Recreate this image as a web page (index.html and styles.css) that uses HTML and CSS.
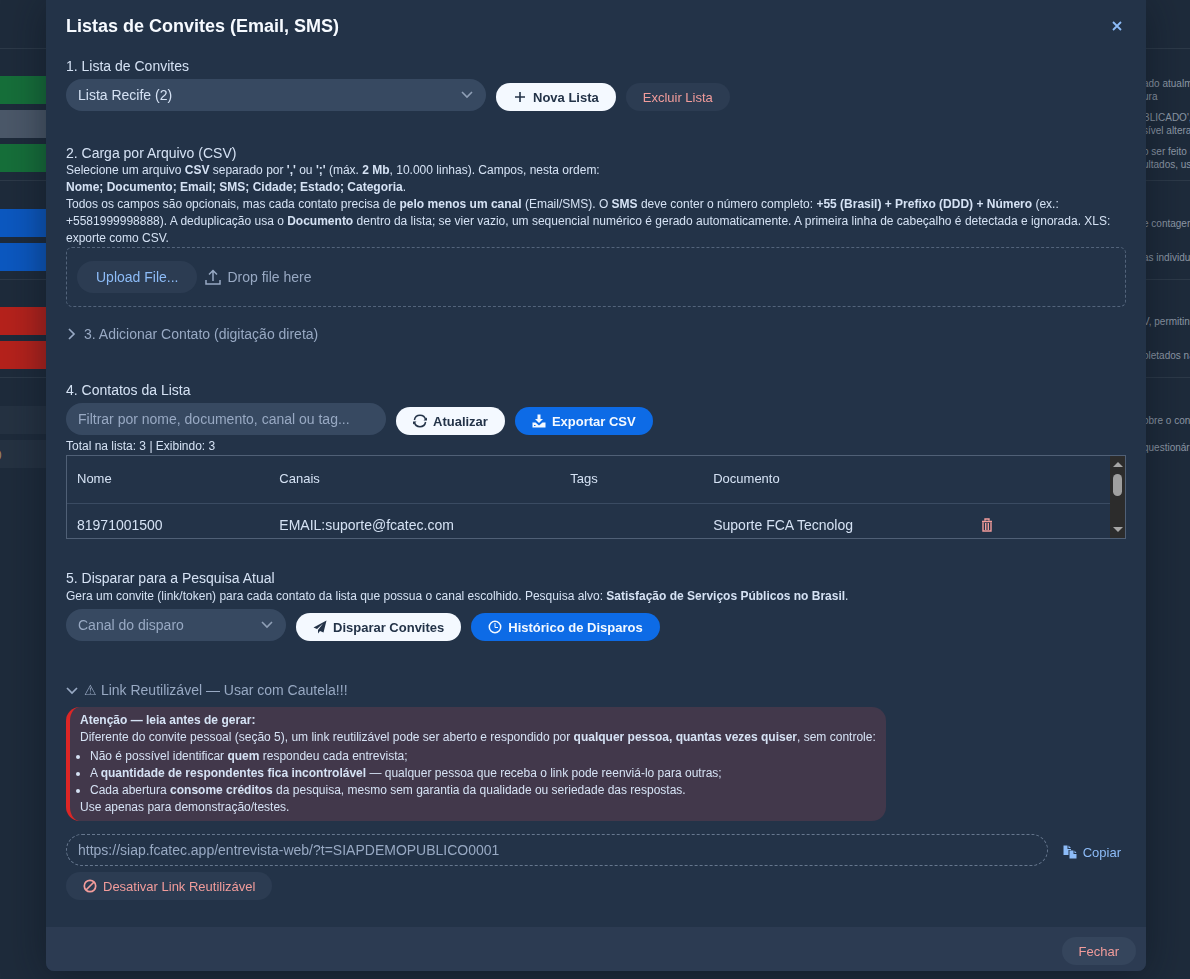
FILE: index.html
```
<!DOCTYPE html>
<html lang="pt-BR">
<head>
    <meta charset="UTF-8">
    <meta name="viewport" content="width=device-width, initial-scale=1.0">
    <title>Listas de Convites</title>
    <link rel="stylesheet" href="styles.css">
</head>
<body>
<main class="page">
    <section class="group group-top"></section>
    <section class="group">
        <div class="action"><span class="bar green"></span><p class="help">ado atualm<br>ura</p></div>
        <div class="action"><span class="bar gray"></span><p class="help">BLICADO',<br>sível altera</p></div>
        <div class="action"><span class="bar green"></span><p class="help">o ser feito q<br>ultados, us</p></div>
    </section>
    <section class="group group-tall">
        <div class="action"><span class="bar blue"></span><p class="help">e contagem</p></div>
        <div class="action"><span class="bar blue"></span><p class="help">as individua</p></div>
    </section>
    <section class="group">
        <div class="action"><span class="bar red"></span><p class="help">V, permitind</p></div>
        <div class="action"><span class="bar red"></span><p class="help">oletados na</p></div>
    </section>
    <section class="group group-tall">
        <div class="action"><span class="bar dim"></span><p class="help">obre o con</p></div>
        <div class="action"><span class="bar dim">)</span><p class="help">questionário<br>&nbsp;</p></div>
    </section>
</main>

<div class="overlay">
    <div class="dialog" role="dialog" aria-labelledby="dialog-title">
        <header class="dialog-header">
            <h1 id="dialog-title">Listas de Convites (Email, SMS)</h1>
            <button type="button" class="close" aria-label="Fechar janela">
                <svg width="10" height="10" viewBox="0 0 10 10"><path d="M1 1l8 8M9 1L1 9" fill="none" stroke="currentColor" stroke-width="1.800"/></svg>
            </button>
        </header>

        <div class="dialog-body">
            <section class="lists">
                <label class="title" for="list">1. Lista de Convites</label>
                <div class="controls">
                    <div class="select select-wide">
                        <select id="list">
                            <option>Lista Recife (2)</option>
                        </select>
                        <svg class="chevron" width="12" height="8" viewBox="0 0 12 8"><path d="M1 1l5 5 5-5" fill="none" stroke="currentColor" stroke-width="1.600"/></svg>
                    </div>
                    <button type="button" class="btn btn-light">
                        <svg width="14" height="14" viewBox="0 0 14 14"><path d="M7 2v10M2 7h10" fill="none" stroke="currentColor" stroke-width="1.600"/></svg>
                        Nova Lista
                    </button>
                    <button type="button" class="btn btn-danger">Excluir Lista</button>
                </div>
            </section>

            <section class="upload">
                <h2 class="title">2. Carga por Arquivo (CSV)</h2>
                <p class="text">Selecione um arquivo <b>CSV</b> separado por <b>','</b> ou <b>';'</b> (máx. <b>2 Mb</b>, 10.000 linhas). Campos, nesta ordem:<br>
                    <b>Nome; Documento; Email; SMS; Cidade; Estado; Categoria</b>.<br>
                    Todos os campos são opcionais, mas cada contato precisa de <b>pelo menos um canal</b> (Email/SMS). O <b>SMS</b> deve conter o número completo: <b>+55 (Brasil) + Prefixo (DDD) + Número</b> (ex.: +5581999998888). A deduplicação usa o <b>Documento</b> dentro da lista; se vier vazio, um sequencial numérico é gerado automaticamente. A primeira linha de cabeçalho é detectada e ignorada. XLS: exporte como CSV.</p>
                <div class="drop-zone">
                    <button type="button" class="btn btn-upload">Upload File...</button>
                    <svg width="16" height="16" viewBox="0 0 16 16"><path d="M8 12V2M4 5.500l4-4 4 4M1 11v4h14v-4" fill="none" stroke="currentColor" stroke-width="1.500"/></svg>
                    <span>Drop file here</span>
                </div>
            </section>

            <details class="add-contact">
                <summary class="title">
                    <svg width="12" height="12" viewBox="0 0 12 12"><path d="M3 1l5 5-5 5" fill="none" stroke="currentColor" stroke-width="1.700"/></svg>
                    3. Adicionar Contato (digitação direta)
                </summary>
            </details>

            <section class="contacts">
                <label class="title" for="filter">4. Contatos da Lista</label>
                <div class="controls">
                    <input type="text" id="filter" class="field" placeholder="Filtrar por nome, documento, canal ou tag...">
                    <button type="button" class="btn btn-light">
                        <svg width="14" height="14" viewBox="0 0 14 14"><path d="M1.400 6A5.700 5.700 0 0 1 12.600 6M12.600 8A5.700 5.700 0 0 1 1.400 8" fill="none" stroke="currentColor" stroke-width="1.500"/><path d="M14 3.500V6.500h-3.500zM0 10.500V7.500h3.500z" fill="currentColor"/></svg>
                        Atualizar
                    </button>
                    <button type="button" class="btn btn-primary">
                        <svg width="14" height="14" viewBox="0 0 14 14"><path d="M5.500 0.500h3V5H11L7 9 3 5h2.500zM0.500 8.500h3L7 11.500l3.500-3h3v5h-13z" fill="currentColor"/><path d="M2 11.500h1.500" stroke="#0d6be6"/></svg>
                        Exportar CSV
                    </button>
                </div>
                <p class="text total">Total na lista: 3 | Exibindo: 3</p>
                <div class="grid">
                    <div class="grid-view">
                        <table>
                            <thead>
                                <tr><th class="col-name">Nome</th><th class="col-channel">Canais</th><th class="col-tags">Tags</th><th class="col-doc">Documento</th><th></th></tr>
                            </thead>
                            <tbody>
                                <tr>
                                    <td>81971001500</td>
                                    <td>EMAIL:suporte@fcatec.com</td>
                                    <td></td>
                                    <td>Suporte FCA Tecnolog</td>
                                    <td>
                                        <button type="button" class="trash" aria-label="Excluir contato">
                                            <svg width="12" height="14" viewBox="0 0 12 14"><path d="M4 2.500V1h4v1.500M1 3.500h10M2 4.500v8.500h8V4.500M4.700 5v7M7.300 5v7" fill="none" stroke="currentColor" stroke-width="1.400"/></svg>
                                        </button>
                                    </td>
                                </tr>
                            </tbody>
                        </table>
                    </div>
                    <div class="scrollbar">
                        <span class="arrow-up"></span>
                        <span class="thumb"></span>
                        <span class="arrow-down"></span>
                    </div>
                </div>
            </section>

            <section class="send">
                <h2 class="title">5. Disparar para a Pesquisa Atual</h2>
                <p class="text">Gera um convite (link/token) para cada contato da lista que possua o canal escolhido. Pesquisa alvo: <b>Satisfação de Serviços Públicos no Brasil</b>.</p>
                <div class="controls">
                    <div class="select">
                        <select class="placeholder" aria-label="Canal do disparo">
                            <option>Canal do disparo</option>
                        </select>
                        <svg class="chevron" width="12" height="8" viewBox="0 0 12 8"><path d="M1 1l5 5 5-5" fill="none" stroke="currentColor" stroke-width="1.600"/></svg>
                    </div>
                    <button type="button" class="btn btn-light">
                        <svg width="14" height="14" viewBox="0 0 14 14"><path d="M13.500 0.500L0.500 7.500l3.500 1.500 6-5.500-5 6.500v3.500l2-2.500 3.500 1.500z" fill="currentColor"/></svg>
                        Disparar Convites
                    </button>
                    <button type="button" class="btn btn-primary">
                        <svg width="14" height="14" viewBox="0 0 14 14"><circle cx="7" cy="7" r="5.700" fill="none" stroke="currentColor" stroke-width="1.500"/><path d="M7 3v4.500h3" fill="none" stroke="currentColor"/></svg>
                        Histórico de Disparos
                    </button>
                </div>
            </section>

            <details class="reusable" open>
                <summary class="title">
                    <svg width="12" height="12" viewBox="0 0 12 12"><path d="M1 4l5 5 5-5" fill="none" stroke="currentColor" stroke-width="1.700"/></svg>
                    ⚠ Link Reutilizável — Usar com Cautela!!!
                </summary>
                <div class="warning text">
                    <b>Atenção — leia antes de gerar:</b>
                    <p>Diferente do convite pessoal (seção 5), um link reutilizável pode ser aberto e respondido por <b>qualquer pessoa, quantas vezes quiser</b>, sem controle:</p>
                    <ul>
                        <li>Não é possível identificar <b>quem</b> respondeu cada entrevista;</li>
                        <li>A <b>quantidade de respondentes fica incontrolável</b> — qualquer pessoa que receba o link pode reenviá-lo para outras;</li>
                        <li>Cada abertura <b>consome créditos</b> da pesquisa, mesmo sem garantia da qualidade ou seriedade das respostas.</li>
                    </ul>
                    <p>Use apenas para demonstração/testes.</p>
                </div>
                <div class="controls link-row">
                    <input type="text" class="field link" aria-label="Link reutilizável" value="https://siap.fcatec.app/entrevista-web/?t=SIAPDEMOPUBLICO0001" readonly>
                    <button type="button" class="btn btn-copy">
                        <svg width="14" height="14" viewBox="0 0 14 14"><path d="M0.500 0.500h4V4H8v1H5.500v5h-5zM5.500 0.500L8 3H5.500zM6.500 5.500h4V9h3v4.500h-7zM11.500 5.500L13.500 8h-2z" fill="currentColor"/></svg>
                        Copiar
                    </button>
                </div>
                <button type="button" class="btn btn-danger">
                    <svg width="14" height="14" viewBox="0 0 14 14"><circle cx="7" cy="7" r="5.700" fill="none" stroke="currentColor" stroke-width="1.700"/><path d="M11 3l-8 8" stroke="currentColor" stroke-width="1.700"/></svg>
                    Desativar Link Reutilizável
                </button>
            </details>
        </div>

        <footer class="dialog-footer">
            <button type="button" class="btn btn-danger">Fechar</button>
        </footer>
    </div>
</div>
</body>
</html>
```
FILE: styles.css
```
* {
    box-sizing: border-box;
}

body {
    margin: 0;
    min-height: 100vh;
    overflow: hidden;
    background-color: #1e2b3b;
    color: #d5e2f4;
    font-family: "Liberation Sans", Arial, sans-serif;
    font-size: 14px;
    line-height: 18px;
}

h1, h2, p, ul {
    margin: 0;
}

button, input, select {
    font-family: inherit;
}

svg {
    flex: none;
}

/* page behind the dialog */
.group {
    display: flex;
    flex-direction: column;
    gap: 6px;
    padding: 27px 0 8px;
    border-bottom: 1px solid #2d3a49;
}

.group-top {
    padding: 24px 0;
}

.group-tall {
    padding-top: 28px;
}

.group:last-child {
    border-bottom: none;
}

.action {
    display: flex;
    justify-content: space-between;
    align-items: center;
    height: 28px;
}

.bar {
    width: 60px;
    height: 28px;
    font-size: 11px;
    line-height: 28px;
    text-indent: -2px;
    color: #b08d6a;
}

.green {
    background-color: #166f3a;
}

.gray {
    background-color: #4b5869;
}

.blue {
    background-color: #0c58c0;
}

.red {
    background-color: #b5221c;
}

.dim {
    background-color: #253242;
}

.help {
    width: 47px;
    overflow: hidden;
    white-space: nowrap;
    font-size: 10px;
    line-height: 13px;
    color: #8d98a6;
}

/* dialog */
.overlay {
    position: fixed;
    inset: 0;
    display: flex;
    justify-content: center;
    align-items: flex-start;
    padding-left: 2px;
}

.dialog {
    width: 100%;
    max-width: 1100px;
    border-radius: 0 0 8px 8px;
    background-color: #233348;
    box-shadow: 0 4px 40px rgba(10, 18, 28, 0.5);
    overflow: hidden;
}

.dialog-header {
    display: flex;
    justify-content: space-between;
    align-items: center;
    padding: 14px 20px 19px;
}

.dialog-header h1 {
    font-size: 18px;
    line-height: 24px;
    color: #f6faff;
}

.close, .trash {
    display: flex;
    padding: 0;
    border: none;
    background: none;
    color: #8dbcf8;
}

.close {
    padding: 4px;
}

.dialog-body {
    padding: 0 20px 27px;
}

.title {
    display: block;
    font-size: 14px;
    font-weight: normal;
    line-height: 18px;
}

.text {
    font-size: 12px;
    line-height: 17px;
}

.controls {
    display: flex;
    align-items: flex-end;
    gap: 10px;
    margin-top: 4px;
}

.select {
    position: relative;
    width: 220px;
}

.select-wide {
    width: 420px;
}

.select select, .field {
    width: 100%;
    height: 32px;
    padding: 0 11px;
    border: 1px solid transparent;
    border-radius: 16px;
    background-color: #374961;
    color: #d5e2f4;
    font-size: 14px;
    appearance: none;
}

.select .placeholder, .field::placeholder {
    color: #98a9c3;
}

.chevron {
    position: absolute;
    right: 13px;
    top: 12px;
    color: #8f9fb6;
    pointer-events: none;
}

.contacts .field {
    width: 320px;
}

.btn {
    display: flex;
    align-items: center;
    gap: 6px;
    height: 28px;
    padding: 0 17px;
    border: none;
    border-radius: 14px;
    background-color: #2c3c52;
    font-size: 13px;
    white-space: nowrap;
}

.btn-light {
    background-color: #f4f9ff;
    color: #233348;
    font-weight: bold;
}

.btn-primary {
    background-color: #0d6be6;
    color: #f4f9ff;
    font-weight: bold;
}

.btn-danger {
    color: #f29c9b;
}

.upload {
    margin-top: 33px;
}

.drop-zone {
    display: flex;
    align-items: center;
    gap: 6px;
    height: 60px;
    padding: 0 10px;
    border: 1px dashed #53647b;
    border-radius: 6px;
    color: #98a9c3;
}

.btn-upload {
    height: 32px;
    margin-right: 2px;
    padding: 0 19px;
    border-radius: 16px;
    color: #8dbcf8;
    font-size: 14px;
}

summary.title {
    display: flex;
    align-items: center;
    gap: 6px;
    color: #98a9c3;
    list-style: none;
}

.add-contact {
    margin-top: 18px;
}

.contacts {
    margin-top: 38px;
}

.total {
    margin-top: 3px;
}

/* contact list */
.grid {
    display: flex;
    height: 84px;
    border: 1px solid #506076;
}

.grid-view {
    flex: 1;
    overflow: hidden;
}

.grid table {
    width: 100%;
    border-collapse: collapse;
    table-layout: fixed;
}

.grid th, .grid td {
    padding: 0 10px;
    text-align: left;
}

.grid th {
    height: 47px;
    border-bottom: 1px solid #3a4b62;
    font-size: 13px;
    font-weight: normal;
}

.grid td {
    height: 44px;
}

.col-name {
    width: 19.4%;
}

.col-channel {
    width: 27.9%;
}

.col-tags {
    width: 13.7%;
}

.col-doc {
    width: 25.7%;
}

.trash {
    color: #f29c9b;
}

.scrollbar {
    display: flex;
    flex-direction: column;
    align-items: center;
    width: 15px;
    padding: 6px 0;
    background-color: #2c2c2c;
}

.arrow-up, .arrow-down {
    border: 5px solid transparent;
}

.arrow-up {
    border-top: none;
    border-bottom-color: #a6a6a6;
}

.arrow-down {
    margin-top: auto;
    border-bottom: none;
    border-top-color: #a6a6a6;
}

.thumb {
    width: 9px;
    height: 22px;
    margin-top: 7px;
    border-radius: 5px;
    background-color: #9f9f9f;
}

.send {
    margin-top: 30px;
}

.send .text {
    margin-top: 1px;
}

.reusable {
    margin-top: 40px;
}

.warning {
    width: fit-content;
    margin-top: 8px;
    padding: 5px 10px;
    border-left: 4px solid #dc2626;
    border-radius: 14px;
    background-color: #42384b;
}

.warning ul {
    padding-left: 10px;
    margin-top: 2px;
}

.link-row {
    margin: 13px 0 6px;
}

.link-row .field {
    flex: 1;
}

.field.link {
    border: 1px dashed #66778e;
    background-color: transparent;
    color: #98a9c3;
}

.btn-copy {
    padding: 0 5px;
    background: none;
    color: #8dbcf8;
}

.dialog-footer {
    display: flex;
    justify-content: flex-end;
    padding: 10px 10px 6px;
    background-color: #2c3b52;
}

.dialog-footer .btn {
    background-color: #35455c;
}
```
